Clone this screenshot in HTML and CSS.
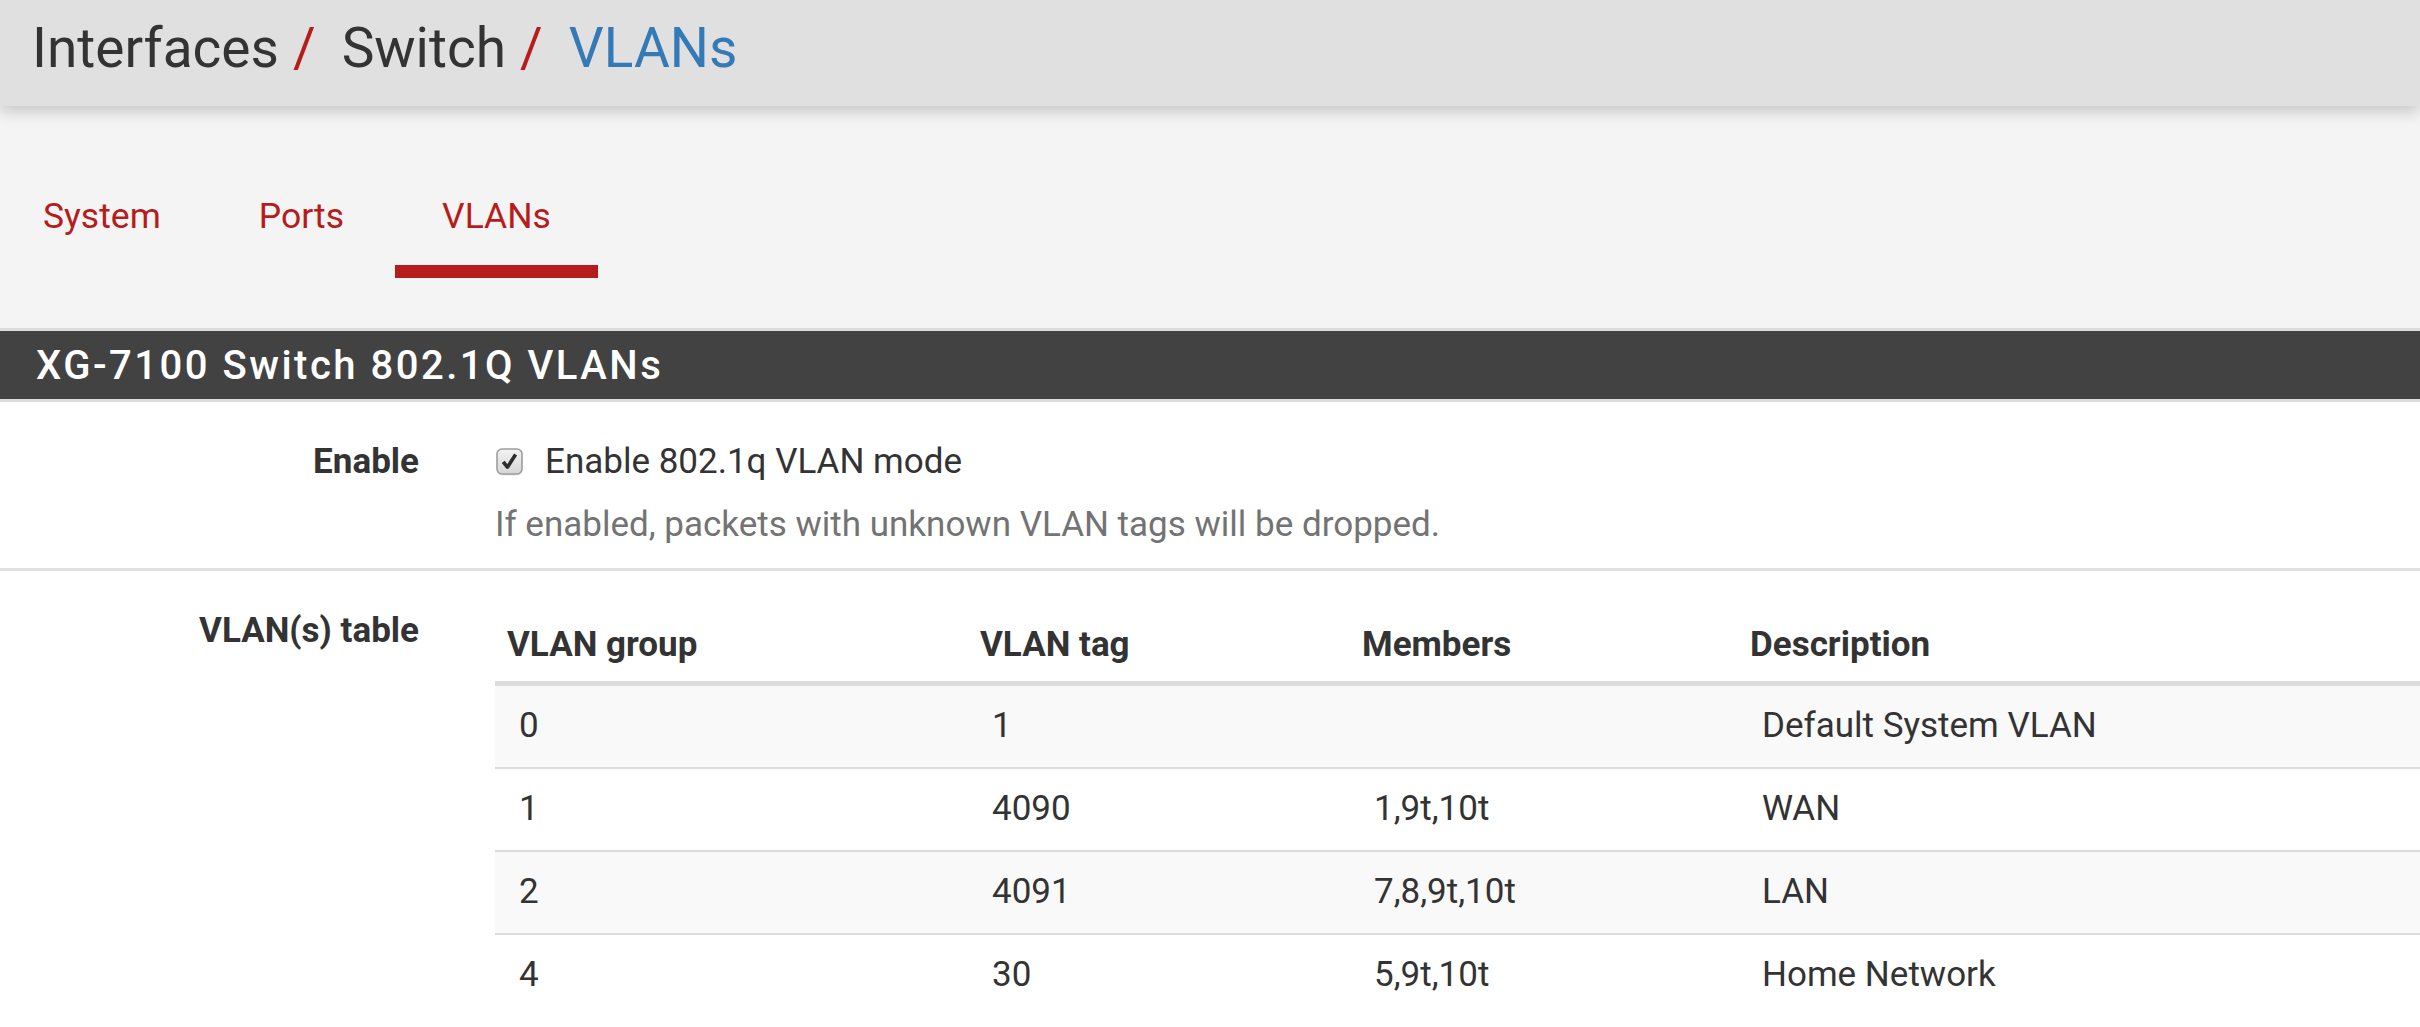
FILE: index.html
```html
<!DOCTYPE html>
<html lang="en">
<head>
<meta charset="utf-8">
<title>Interfaces / Switch / VLANs</title>
<link rel="stylesheet" href="styles.css">
</head>
<body>
<header class="topbar">
  <h1 class="crumbs"><span class="crumb">Interfaces</span><span class="sep">/</span><span class="crumb">Switch</span><span class="sep">/</span><span class="crumb current">VLANs</span></h1>
</header>
<nav class="tabs">
  <ul class="tab-list">
    <li><a class="tab" href="#">System</a></li>
    <li><a class="tab" href="#">Ports</a></li>
    <li><a class="tab active" href="#">VLANs</a></li>
  </ul>
</nav>
<section class="panel">
  <h2 class="panel-title">XG-7100 Switch 802.1Q VLANs</h2>
  <div class="panel-body">
    <div class="form-row">
      <div class="form-label">Enable</div>
      <div class="form-field">
        <label class="check-line">
          <svg class="checkbox" width="27" height="29" viewBox="0 0 27 29" aria-hidden="true">
            <defs>
              <linearGradient id="cbg" x1="0" y1="0" x2="0" y2="1">
                <stop offset="0" stop-color="#f2f2f2"/>
                <stop offset="1" stop-color="#d6d6d6"/>
              </linearGradient>
            </defs>
            <rect x="1" y="2.5" width="25" height="25" rx="5" fill="#e4e4e4"/>
            <rect x="1" y="1" width="25" height="25" rx="5" fill="url(#cbg)" stroke="#9d9d9d" stroke-width="1.6"/>
            <path d="M7.2 13.8 L11.4 19.2 L19.6 6.6" fill="none" stroke="#2d2d2d" stroke-width="3.6" stroke-linejoin="round"/>
          </svg>
          <span>Enable 802.1q VLAN mode</span>
        </label>
        <p class="help">If enabled, packets with unknown VLAN tags will be dropped.</p>
      </div>
    </div>
    <div class="form-row">
      <div class="form-label">VLAN(s) table</div>
      <div class="form-field">
        <table class="vlans">
          <colgroup>
            <col class="c-group">
            <col class="c-tag">
            <col class="c-members">
            <col class="c-desc">
          </colgroup>
          <thead>
            <tr><th>VLAN group</th><th>VLAN tag</th><th>Members</th><th>Description</th></tr>
          </thead>
          <tbody>
            <tr><td>0</td><td>1</td><td></td><td>Default System VLAN</td></tr>
            <tr><td>1</td><td>4090</td><td>1,9t,10t</td><td>WAN</td></tr>
            <tr><td>2</td><td>4091</td><td>7,8,9t,10t</td><td>LAN</td></tr>
            <tr><td>4</td><td>30</td><td>5,9t,10t</td><td>Home Network</td></tr>
          </tbody>
        </table>
      </div>
    </div>
  </div>
</section>
</body>
</html>
```
FILE: styles.css
```css
html, body {
  margin: 0;
  padding: 0;
}

body {
  font-family: Roboto, "Noto Sans", "Liberation Sans", sans-serif;
  color: #333;
  background: #fff;
  overflow: hidden;
}

/* ---------- top bar / breadcrumbs ---------- */
.topbar {
  position: relative;
  z-index: 1;
  height: 106px;
  box-sizing: border-box;
  padding: 15px 32px 0;
  background: #e0e0e0;
  box-shadow: 0 6px 14px rgba(0, 0, 0, 0.18);
}

.crumbs {
  display: flex;
  margin: 0;
  font-size: 55px;
  font-weight: 400;
  line-height: 66px;
  color: #333;
}

.sep {
  color: #b71c1c;
  padding: 0 26px 0 14px;
}

.current {
  color: #337ab7;
}

/* ---------- tabs ---------- */
.tabs {
  background: #f4f4f4;
  padding: 89px 0 50px;
}

.tab-list {
  display: flex;
  gap: 4px;
  list-style: none;
  margin: 0 0 0 -4px;
  padding: 0;
}

.tab {
  display: flex;
  flex-direction: column;
  padding: 0 47px;
  color: #b71c1c;
  font-size: 35.5px;
  line-height: 42px;
  text-decoration: none;
}

.tab::after {
  content: "";
  height: 13px;
  margin: 28px -47px 0;
  background: transparent;
}

.tab.active::after {
  background: #b71c1c;
}

/* ---------- panel ---------- */
.panel {
  border-top: 3px solid #dcdcdc;
}

.panel-title {
  margin: 0;
  padding: 11px 36px 10px;
  background: #424242;
  color: #fff;
  font-size: 40px;
  font-weight: 500;
  letter-spacing: 2.5px;
  line-height: 47px;
  border-bottom: 3px solid #dcdcdc;
}

.form-row {
  display: grid;
  grid-template-columns: 419px 1fr;
  column-gap: 76px;
  padding: 36px 0 19px;
  font-size: 35px;
  line-height: 48px;
}

.form-row + .form-row {
  border-top: 3px solid #e0e0e0;
}

.form-label {
  text-align: right;
  font-weight: 700;
}

.check-line {
  display: flex;
  align-items: center;
  gap: 22px;
}

.checkbox {
  display: block;
  margin-left: 1px;
}

.help {
  margin: 15px 0 0;
  color: #737373;
}

/* ---------- table ---------- */
.vlans {
  width: 100%;
  table-layout: fixed;
  border-collapse: separate;
  border-spacing: 0;
}

.c-group { width: 473px; }
.c-tag { width: 382px; }
.c-members { width: 388px; }

.vlans th {
  text-align: left;
  font-weight: 700;
  padding: 14px 12px 12px;
  border-bottom: 5px solid #dcdcdc;
}

.vlans td {
  padding: 16px 12px 17px 24px;
  height: 48px;
  box-sizing: content-box;
}

.vlans tbody tr + tr td {
  border-top: 2px solid #dcdcdc;
}

.vlans tbody tr:nth-child(odd) td {
  background: #f9f9f9;
}
```
